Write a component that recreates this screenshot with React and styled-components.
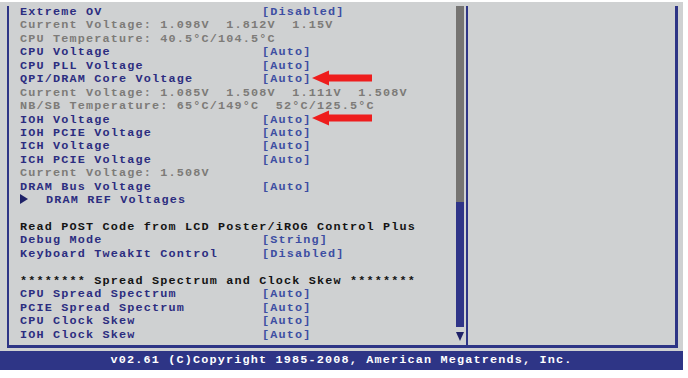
import React from 'react'
import styled, { createGlobalStyle } from 'styled-components'

const GlobalStyle = createGlobalStyle`
body {
  margin: 0;
  background: #ffffff;
}
`

const Screen = styled.div`
width: 683px;
height: 368px;
margin-top: 2px;
padding-top: 4px;
box-sizing: border-box;
background: #cfd1d2;
display: flex;
flex-direction: column;
font-family: "Liberation Mono", "Courier New", monospace;
font-size: 11.8px;
letter-spacing: 1.17px;
font-weight: 700;
`

const Frame = styled.div`
display: flex;
width: 671px;
height: 342px;
margin-left: 7px;
box-sizing: border-box;
border-bottom: 3px solid #2e3586;
`

const MainPanel = styled.div`
width: 449px;
box-sizing: border-box;
border-left: 2px solid #2e3586;
padding-left: 11px;
overflow: hidden;
`

const Row = styled.div`
display: grid;
grid-template-columns: 242px 1fr;
height: 13.45px;
line-height: 13.45px;
white-space: pre;
color: ${p => (p.tone === 'info' ? '#7d7b78' : p.tone === 'head' ? '#141414' : '#2c2d80')};
`

const Value = styled.span`
display: flex;
align-items: center;
color: #3d4ea2;
`

const Arrow = styled.svg`
width: 60px;
height: 16px;
margin-top: -4px;
flex: none;
`

const Marker = styled.svg`
width: 8px;
height: 10px;
margin-right: 18px;
vertical-align: -1px;
`

const ScrollBar = styled.div`
width: 8px;
display: flex;
flex-direction: column;
`

const Thumb = styled.div`
height: 196px;
background: #767472;
`

const Track = styled.div`
height: 125px;
background: #2f3488;
`

const DownArrow = styled.div`
flex: 1;
display: flex;
align-items: center;
justify-content: center;
`

const SidePanel = styled.div`
width: 212px;
margin-left: 2px;
box-sizing: border-box;
border-left: 2px solid #2e3586;
border-right: 3px solid #2e3586;
`

const Footer = styled.div`
height: 19px;
margin-top: 3px;
background: #2e3586;
color: #ffffff;
text-align: center;
line-height: 19px;
white-space: pre;
`

const RedArrow = () => (
  <Arrow viewBox="0 0 60 16">
    <polygon points="0,8 17,0.5 17,4.5 60,4.5 60,11.5 17,11.5 17,15.5" fill="#ee1d1d" />
  </Arrow>
)

const rows = [
  { label: 'Extreme OV', value: '[Disabled]' },
  { label: 'Current Voltage: 1.098V  1.812V  1.15V', tone: 'info' },
  { label: 'CPU Temperature: 40.5\u00b0C/104.5\u00b0C', tone: 'info' },
  { label: 'CPU Voltage', value: '[Auto]' },
  { label: 'CPU PLL Voltage', value: '[Auto]' },
  { label: 'QPI/DRAM Core Voltage', value: '[Auto]', arrow: true },
  { label: 'Current Voltage: 1.085V  1.508V  1.111V  1.508V', tone: 'info' },
  { label: 'NB/SB Temperature: 65\u00b0C/149\u00b0C  52\u00b0C/125.5\u00b0C', tone: 'info' },
  { label: 'IOH Voltage', value: '[Auto]', arrow: true },
  { label: 'IOH PCIE Voltage', value: '[Auto]' },
  { label: 'ICH Voltage', value: '[Auto]' },
  { label: 'ICH PCIE Voltage', value: '[Auto]' },
  { label: 'Current Voltage: 1.508V', tone: 'info' },
  { label: 'DRAM Bus Voltage', value: '[Auto]' },
  { label: 'DRAM REF Voltages', sub: true },
  { label: '' },
  { label: 'Read POST Code from LCD Poster/iROG Control Plus', tone: 'head' },
  { label: 'Debug Mode', value: '[String]' },
  { label: 'Keyboard TweakIt Control', value: '[Disabled]' },
  { label: '' },
  { label: '******** Spread Spectrum and Clock Skew ********', tone: 'head' },
  { label: 'CPU Spread Spectrum', value: '[Auto]' },
  { label: 'PCIE Spread Spectrum', value: '[Auto]' },
  { label: 'CPU Clock Skew', value: '[Auto]' },
  { label: 'IOH Clock Skew', value: '[Auto]' },
]

const App = () => (
  <Screen>
    <GlobalStyle />
    <Frame>
      <MainPanel>
        {rows.map((row, i) => (
          <Row key={i} tone={row.tone}>
            <span>
              {row.sub && (
                <Marker viewBox="0 0 8 10">
                  <polygon points="0,0 8,5 0,10" fill="#1f2268" />
                </Marker>
              )}
              {row.label}
            </span>
            {row.value && (
              <Value>
                {row.value}
                {row.arrow && <RedArrow />}
              </Value>
            )}
          </Row>
        ))}
      </MainPanel>
      <ScrollBar>
        <Thumb />
        <Track />
        <DownArrow>
          <svg width="8" height="9" viewBox="0 0 8 9">
            <polygon points="0,0 8,0 4,9" fill="#1f2268" />
          </svg>
        </DownArrow>
      </ScrollBar>
      <SidePanel />
    </Frame>
    <Footer>v02.61 (C)Copyright 1985-2008, American Megatrends, Inc.</Footer>
  </Screen>
)

export default App
